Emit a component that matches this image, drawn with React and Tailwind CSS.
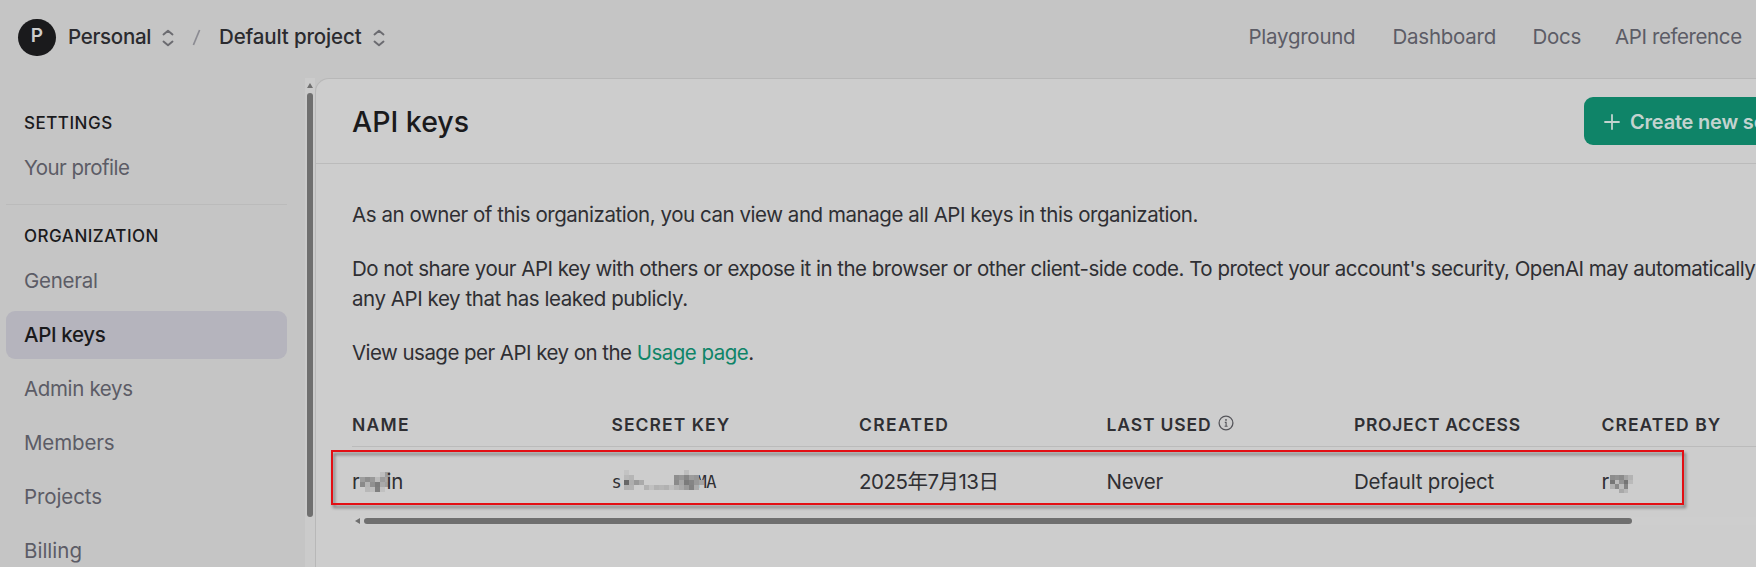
const SANS = "font-['Inter','Noto_Sans_CJK_SC',sans-serif]";

function Chevrons() {
  return (
    <svg width="12" height="18" viewBox="0 0 12 18" fill="none" stroke="#6b6b70" strokeWidth="1.9" strokeLinecap="round" strokeLinejoin="round">
      <path d="M1.5 5.5 L6 1.7 L10.5 5.5" />
      <path d="M1.5 12.5 L6 16.3 L10.5 12.5" />
    </svg>
  );
}

function Header() {
  return (
    <header className="flex h-[78px] shrink-0 items-center pb-[3px] pl-[18px]">
      <div className="flex h-[37px] w-[38px] items-center justify-center rounded-full bg-[#1a1a1c] pb-0.5 text-[19px] font-semibold text-[#cdcdcd]">
        P
      </div>
      <div className="ml-3 w-[94px] text-[20.5px] font-medium tracking-[-0.3px] text-[#2b2b2f]">Personal</div>
      <Chevrons />
      <svg className="ml-[18px]" width="9" height="17" viewBox="0 0 9 17" fill="none" stroke="#8b8b92" strokeWidth="1.7">
        <path d="M7.6 1 L1.4 16" />
      </svg>
      <div className="ml-[18px] w-[153.5px] text-[20.5px] font-medium tracking-[-0.15px] whitespace-nowrap text-[#2b2b2f]">Default project</div>
      <Chevrons />
      <nav className="ml-[864px] flex items-center text-[20.5px] whitespace-nowrap text-[#5c5c66]">
        <a className="w-[144px] tracking-[-0.25px]">Playground</a>
        <a className="w-[140px] tracking-[-0.25px]">Dashboard</a>
        <a className="w-[82.5px] tracking-[-0.3px]">Docs</a>
        <a className="tracking-[-0.4px]">API reference</a>
      </nav>
    </header>
  );
}

function SideLabel({ children }) {
  return (
    <div className="mb-1.5 h-[30px] pl-[18px] text-[17px] leading-[30px] font-medium tracking-[0.5px] text-[#1a1a1c]">
      {children}
    </div>
  );
}

function SideItem({ label, className = "" }) {
  return <a className={`flex h-12 shrink-0 items-center rounded-[9px] pl-[18px] text-[20.5px] ${className}`}>{label}</a>;
}

function Sidebar() {
  return (
    <aside className="flex w-[315px] shrink-0">
      <div className="w-[305px] overflow-hidden pt-[30px] pr-[18px] pl-1.5">
        <SideLabel>SETTINGS</SideLabel>
        <SideItem label="Your profile" className="tracking-[-0.55px] text-[#5c5c66]" />
        <div className="mt-3 h-px bg-[#bbbbbb]" />
        <div className="h-4" />
        <SideLabel>ORGANIZATION</SideLabel>
        <div className="flex flex-col gap-1.5">
          <SideItem label="General" className="tracking-[-0.25px] text-[#5c5c66]" />
          <SideItem label="API keys" className="bg-[#b5b4bd] font-medium tracking-[-0.35px] text-[#1a1a1c]" />
          <SideItem label="Admin keys" className="tracking-[-0.35px] text-[#5c5c66]" />
          <SideItem label="Members" className="tracking-[-0.15px] text-[#5c5c66]" />
          <SideItem label="Projects" className="tracking-[-0.1px] text-[#5c5c66]" />
          <SideItem label="Billing" className="text-[#5c5c66]" />
        </div>
      </div>
      <div className="flex w-[10px] flex-col items-center bg-[#cbcbcb]">
        <svg className="mt-[5px] shrink-0" width="6" height="5" viewBox="0 0 6 5">
          <path d="M3 0 L6 5 H0 Z" fill="#6f6f6f" />
        </svg>
        <div className="mt-[5px] h-[424px] w-1.5 shrink-0 rounded-full bg-[#6f6f6f]" />
      </div>
    </aside>
  );
}

const nameCells = [
  [4, 0, "#bebebe"], [5, 0, "#9d9d9d"],
  [0, 1, "#9d9d9d"], [1, 1, "#8e8e8e"], [2, 1, "#999999"], [3, 1, "#bcbcbc"], [4, 1, "#9c9c9c"], [5, 1, "#a6a6a6"],
  [0, 2, "#8a8a8a"], [1, 2, "#b5b5b5"], [2, 2, "#909090"], [3, 2, "#7c7c7c"], [4, 2, "#a9a9a9"], [5, 2, "#a0a0a0"],
  [1, 3, "#b8b8b8"], [2, 3, "#bdbdbd"], [3, 3, "#7f7f7f"], [4, 3, "#c0c0c0"],
];

const keyCells = [
  [0, 0, "#c3c3c3"], [12, 0, "#bdbdbd"],
  [0, 1, "#b9b9b9"], [1, 1, "#b5b5b5"], [10, 1, "#8f8f8f"], [11, 1, "#979797"], [12, 1, "#868686"], [13, 1, "#9c9c9c"], [14, 1, "#969696"],
  [0, 2, "#676767"], [1, 2, "#aeaeae"], [2, 2, "#999999"], [3, 2, "#aaaaaa"], [10, 2, "#8b8b8b"], [11, 2, "#a5a5a5"], [12, 2, "#7b7b7b"], [13, 2, "#858585"], [14, 2, "#999999"], [15, 2, "#a5a5a5"],
  [0, 3, "#b0b0b0"], [1, 3, "#b2b2b2"], [4, 3, "#b2b2b2"], [5, 3, "#c0c0c0"], [6, 3, "#b2b2b2"], [7, 3, "#b6b6b6"], [8, 3, "#b1b1b1"], [9, 3, "#bfbfbf"], [10, 3, "#b4b4b4"], [11, 3, "#aaaaaa"], [12, 3, "#9a9a9a"], [13, 3, "#828282"], [14, 3, "#acacac"],
];

const ownerCells = [
  [0, 0, "#8d8d8d"], [1, 0, "#929292"], [2, 0, "#8b8b8b"], [3, 0, "#a5a5a5"], [4, 0, "#b3b3b3"],
  [0, 1, "#767676"], [1, 1, "#bcbcbc"], [2, 1, "#949494"], [3, 1, "#757575"], [4, 1, "#bababa"],
  [0, 2, "#b1b1b1"], [1, 2, "#8a8a8a"], [2, 2, "#bcbcbc"], [3, 2, "#858585"],
  [2, 3, "#a9a9a9"], [3, 3, "#b8b8b8"],
];

function Mosaic({ cells, cell, cols, rows, className }) {
  return (
    <svg className={className} width={cols * cell} height={rows * cell} shapeRendering="crispEdges">
      {cells.map(([x, y, fill]) => (
        <rect key={`${x}-${y}`} x={x * cell} y={y * cell} width={cell} height={cell} fill={fill} />
      ))}
    </svg>
  );
}

function KeysTable() {
  return (
    <div className="relative mt-9">
      <div className="grid h-[43px] grid-cols-[259.5px_247.5px_247.5px_247.5px_247.5px_240px] items-center border-b border-[#bbbbbb] text-[17.5px] font-semibold whitespace-nowrap text-[#2f2f33]">
        <div className="tracking-[1.3px]">NAME</div>
        <div className="tracking-[1.05px]">SECRET KEY</div>
        <div className="tracking-[1.35px]">CREATED</div>
        <div className="flex items-center tracking-[0.85px]">
          LAST USED
          <svg className="-mt-1 ml-[7px]" width="16" height="16" viewBox="0 0 16 16" fill="none">
            <circle cx="8" cy="8" r="6.9" stroke="#55555a" strokeWidth="1.3" />
            <circle cx="8" cy="4.9" r="0.9" fill="#55555a" />
            <path d="M6.8 7.4 H8.1 V11.2 M6.6 11.2 H9.6" stroke="#55555a" strokeWidth="1.1" />
          </svg>
        </div>
        <div className="tracking-[0.7px]">PROJECT ACCESS</div>
        <div className="tracking-[1.05px]">CREATED BY</div>
      </div>
      <div className="grid h-[70px] grid-cols-[259.5px_247.5px_247.5px_247.5px_247.5px_240px] items-center text-[20.5px] whitespace-nowrap text-[#2f2f33]">
        <div className="flex items-center">
          <span className="w-[7.5px]">r</span>
          <Mosaic className="-mt-px" cells={nameCells} cell={5} cols={6} rows={4} />
          <span className="-ml-[3px] tracking-[-0.3px]">in</span>
        </div>
        <div className="flex items-center font-['DejaVu_Sans_Mono',monospace] text-[17px]">
          <span className="w-[12px]">s</span>
          <Mosaic className="z-10 -mt-[5px] -mr-1" cells={keyCells} cell={5} cols={16} rows={4} />
          <span className="-ml-[3px] tracking-[-0.5px]">MA</span>
        </div>
        <div className="tracking-[-0.5px]">2025年7月13日</div>
        <div className="tracking-[-0.25px]">Never</div>
        <div className="tracking-[-0.2px]">Default project</div>
        <div className="flex items-center">
          <span className="w-[8.5px]">r</span>
          <Mosaic className="mt-1" cells={ownerCells} cell={4.6} cols={5} rows={4} />
        </div>
      </div>
      <div className="flex h-2 items-center bg-[#cecece]">
        <svg className="ml-[3px]" width="5" height="6" viewBox="0 0 5 6">
          <path d="M0 3 L5 0 V6 Z" fill="#6f6f6f" />
        </svg>
        <div className="ml-1 h-1.5 w-[1268px] rounded-full bg-[#6f6f6f]" />
      </div>
      <div className="absolute top-[46px] left-[-21px] h-[55px] w-[1353px] border-2 border-[#e30f14] drop-shadow-[2px_3px_1.5px_rgba(0,0,0,0.4)]" />
    </div>
  );
}

function Main() {
  return (
    <main className="w-[1441px] shrink-0 overflow-hidden rounded-tl-[14px] border-t border-l border-[#b8b8b8] bg-[#cdcdcd]">
      <div className="flex h-[85px] items-center justify-between border-b border-[#bbbbbb] pl-9">
        <h1 className="pt-0.5 text-[28.5px] font-medium text-[#1a1a1c]">API keys</h1>
        <button className="flex h-12 w-[172px] items-center overflow-hidden rounded-l-[9px] bg-[#0f8468] pt-px pl-5 text-[20px] font-semibold tracking-[-0.2px] whitespace-nowrap text-[#c3d3cf]">
          <svg className="mr-[10px] shrink-0" width="16" height="16" viewBox="0 0 16 16" stroke="#c3d3cf" strokeWidth="1.8" strokeLinecap="round">
            <path d="M8 1 V15 M1 8 H15" />
          </svg>
          Create new secret key
        </button>
      </div>
      <div className="w-[1500px] pt-9 pl-9 text-[20.5px] leading-[30px] text-[#2f2f33]">
        <p className="mb-6 tracking-[-0.45px]">
          As an owner of this organization, you can view and manage all API keys in this organization.
        </p>
        <p className="mb-6 whitespace-nowrap">
          <span className="tracking-[-0.5px]">
            Do not share your API key with others or expose it in the browser or other client-side code. To protect your account's security, OpenAI may automatically
          </span>
          <br />
          <span className="tracking-[-0.44px]">any API key that has leaked publicly.</span>
        </p>
        <p>
          <span className="tracking-[-0.54px]">View usage per API key on the </span>
          <a className="tracking-[-0.5px] text-[#0f8468]">Usage page</a>.
        </p>
        <KeysTable />
      </div>
    </main>
  );
}

export default function App() {
  return (
    <div className={`flex h-[567px] w-[1756px] flex-col overflow-hidden bg-[#c5c5c5] ${SANS}`}>
      <Header />
      <div className="flex min-h-0 flex-1">
        <Sidebar />
        <Main />
      </div>
    </div>
  );
}
